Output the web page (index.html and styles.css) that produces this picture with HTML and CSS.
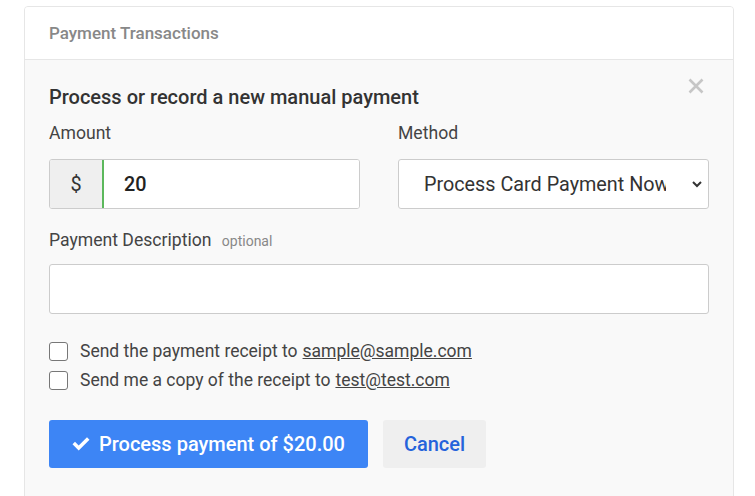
FILE: index.html
```html
<!DOCTYPE html>
<html>
<head>
<meta charset="utf-8">
<link rel="stylesheet" href="styles.css">
</head>
<body>
<div class="card">
  <div class="card-header">Payment Transactions</div>
  <div class="card-body">
    <div class="title-row">
      <h2 class="title">Process or record a new manual payment</h2>
      <svg class="close" width="16" height="16" viewBox="0 0 16 16"><path d="M1.5 1.5 L14.5 14.5 M14.5 1.5 L1.5 14.5" stroke="#c6c6c6" stroke-width="2.6" fill="none"/></svg>
    </div>
    <div class="row">
      <div class="field">
        <label class="label">Amount</label>
        <div class="input-group">
          <span class="addon">$</span>
          <div class="input amount">20</div>
        </div>
      </div>
      <div class="field">
        <label class="label">Method</label>
        <div class="select">
          <span class="select-text">Process Card Payment Now</span>
          <svg class="chev" width="12" height="8" viewBox="0 0 12 8"><path d="M2 2 L6 6 L10 2" fill="none" stroke="#333" stroke-width="2"/></svg>
        </div>
      </div>
    </div>
    <div class="field desc">
      <label class="label">Payment Description <span class="optional">optional</span></label>
      <div class="input wide"></div>
    </div>
    <div class="checks">
      <label class="check"><span class="box"></span>Send the payment receipt to <u>sample@sample.com</u></label>
      <label class="check"><span class="box"></span>Send me a copy of the receipt to <u>test@test.com</u></label>
    </div>
    <div class="actions">
      <button class="btn primary"><svg width="18" height="14" viewBox="0 0 18 14"><path d="M0.5 7.3 L3 4.8 L6.7 8.5 L15 0.2 L17.5 2.7 L6.7 13.5 Z" fill="#fff"/></svg>Process payment of $20.00</button>
      <button class="btn cancel">Cancel</button>
    </div>
  </div>
</div>
</body>
</html>
```
FILE: styles.css
```css
html, body { margin: 0; padding: 0; background: #fff; }
body {
  font-family: Roboto, "Liberation Sans", sans-serif;
  color: #333;
  padding: 6px 20px 0 24px;
}
.card {
  border: 1px solid #e6e6e6;
  border-radius: 4px 4px 0 0;
  width: 708px;
  height: 520px;
  overflow: hidden;
  background: #f9f9f9;
}
.card-header {
  background: #fff;
  height: 53px;
  box-sizing: border-box;
  border-bottom: 1px solid #e6e6e6;
  padding: 15px 24px 0;
  font-size: 17px;
  line-height: 22px;
  font-weight: 500;
  color: #888;
}
.card-body {
  padding: 25px 24px 0;
}
.title-row {
  display: flex;
  justify-content: space-between;
  align-items: flex-start;
  height: 24px;
}
.title {
  margin: 0;
  font-size: 20px;
  line-height: 24px;
  font-weight: 500;
  color: #333;
}
.close {
  margin-right: 5px;
  margin-top: -7px;
}
.row {
  display: flex;
  gap: 38px;
  margin-top: 13px;
}
.field { flex: 1; }
.label {
  display: block;
  font-size: 17.6px;
  color: #444;
  line-height: 22px;
  margin-bottom: 15px;
}
.optional { font-size: 14px; color: #888; margin-left: 6px; }
.input-group {
  display: flex;
  height: 50px;
  box-sizing: border-box;
  border: 1px solid #ccc;
  border-radius: 3px;
  overflow: hidden;
  background: #fff;
}
.addon {
  width: 52px;
  background: #efefef;
  display: flex;
  align-items: center;
  justify-content: center;
  font-size: 19.8px;
  border-right: 2px solid #5cb85c;
}
.input {
  box-sizing: border-box;
  background: #fff;
}
.amount {
  flex: 1;
  display: flex;
  align-items: center;
  padding-left: 20px;
  font-size: 19.8px;
  font-weight: 500;
  color: #222;
}
.select {
  height: 50px;
  box-sizing: border-box;
  border: 1px solid #ccc;
  border-radius: 3px;
  background: #fff;
  display: flex;
  align-items: center;
  padding: 0 2px 0 25px;
  font-size: 19.8px;
  color: #333;
}
.select-text { width: 242px; overflow: hidden; white-space: nowrap; }
.chev { margin-left: 25px; }
.desc { margin-top: 20px; }
.desc .label { margin-bottom: 12px; }
.wide {
  height: 50px;
  border: 1px solid #ccc;
  border-radius: 3px;
}
.checks { margin-top: 27px; display: flex; flex-direction: column; gap: 9px; }
.check {
  display: flex;
  align-items: center;
  font-size: 17.5px;
  color: #444;
  height: 20px;
}
.check u { text-decoration-color: #444; margin-left: 5px; }
.box {
  width: 19px; height: 19px;
  box-sizing: border-box;
  border: 1px solid #777;
  border-radius: 3px;
  background: #fff;
  margin-right: 12px;
}
.actions { margin-top: 30px; display: flex; gap: 15px; }
.btn {
  height: 48px;
  border: none;
  border-radius: 3px;
  font-family: inherit;
  font-size: 20px;
  font-weight: 500;
  display: flex;
  align-items: center;
  justify-content: center;
  padding: 0;
}
.primary { background: #3d85f5; color: #fff; width: 319px; gap: 9px; }
.cancel { background: #efefef; color: #2563db; width: 103px; }
```
